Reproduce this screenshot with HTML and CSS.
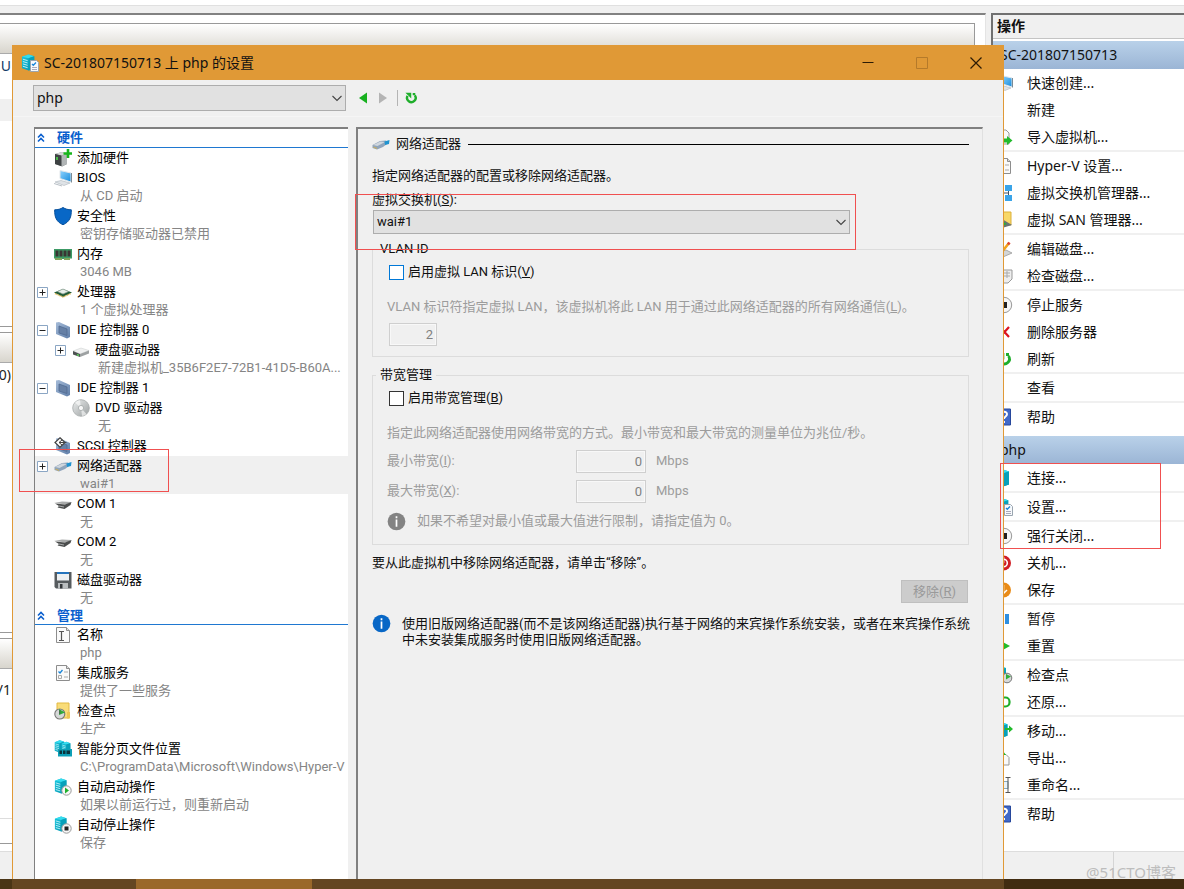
FILE: index.html
```html
<!DOCTYPE html>
<html lang="zh-CN">
<head>
<meta charset="utf-8">
<title>SC-201807150713 上 php 的设置</title>
<link rel="stylesheet" href="styles.css">
</head>
<body>
<svg class="defs" aria-hidden="true">
  <defs>
    <linearGradient id="g-cyan" x1="0" y1="0" x2="1" y2="1"><stop offset="0" stop-color="#16c6de"/><stop offset="1" stop-color="#0791ab"/></linearGradient>
    <linearGradient id="g-steel" x1="0" y1="0" x2="1" y2="1"><stop offset="0" stop-color="#a5bbd8"/><stop offset="1" stop-color="#5f7ea8"/></linearGradient>
    <linearGradient id="g-grey" x1="0" y1="0" x2="1" y2="1"><stop offset="0" stop-color="#eceeee"/><stop offset="1" stop-color="#9a9fa0"/></linearGradient>
    <linearGradient id="g-blue" x1="0" y1="0" x2="1" y2="1"><stop offset="0" stop-color="#8fd4ff"/><stop offset="1" stop-color="#168bdc"/></linearGradient>
  </defs>
  <symbol id="server" viewBox="0 0 18 18"><path d="M1 3l7-2.5 6 2v13L8 17.500 1 15z" fill="url(#g-cyan)"/><path d="M1 3l7-2.500 6 2-6 2z" fill="#35dcef"/><path d="M8 4.500l6-2v13l-6 2z" fill="#07a0ba"/><path d="M2 5.500l5 1.500M2 8l5 1.500M2 10.500L7 12M2 13l5 1.500" stroke="#d8fbff" stroke-width=".9"/></symbol>
  <symbol id="sheet" viewBox="0 0 18 18"><path d="M2.500 1.500h10l3 3v12h-13z" fill="#fafafa" stroke="#8d8d8d"/><path d="M12.500 1.500v3h3" fill="#ddd" stroke="#8d8d8d"/></symbol>
  <symbol id="settings" viewBox="0 0 18 18"><use href="#server" width="17" height="17"/><path d="M9.500 6.500h6l2 2v9h-8z" fill="#f8fafc" stroke="#9aa5b0"/><path d="M11 10l1.300 1.300L15 8.500" fill="none" stroke="#1784d8" stroke-width="1.300"/><path d="M11 13.500h5M11 15.500h5" stroke="#aab"/></symbol>
  <symbol id="addhw" viewBox="0 0 18 18"><path d="M1 5l7-2 5 2v10l-5 2.500L1 15z" fill="#777b7c"/><path d="M1 5l7-2 5 2-5 1.500z" fill="#d5d7d7"/><path d="M1 5l6 1.500V17l-6-2z" fill="#3e4243"/><path d="M8 6.500L13 5v10l-5 2.500z" fill="#b1b5b6"/><path d="M3 8v3" stroke="#4fe34c" stroke-width="1.500"/><path d="M14 0v9M9.500 4.500h8.500" stroke="#18b51c" stroke-width="2.600"/></symbol>
  <symbol id="bios" viewBox="0 0 18 18"><path d="M6 1.500L17 4v9L6 9.500z" fill="url(#g-blue)" stroke="#e1e6ea"/><path d="M17.500 4v9.500" stroke="#7c8a94"/><path d="M1 13l6-1.500 9 2.500-6 2.500z" fill="#dfe3e7" stroke="#adb5bc" stroke-width=".6"/><path d="M0 14.500l8 2.500" stroke="#b7bec5"/></symbol>
  <symbol id="shield" viewBox="0 0 18 18"><path d="M9 .5c2.500 1.600 5 2.300 8.300 2.300C17.600 10 15.500 15 9 17.700 2.500 15 .4 10 .7 2.800 4 2.800 6.500 2.100 9 .5z" fill="#0867c6" stroke="#064f9b"/></symbol>
  <symbol id="memory" viewBox="0 0 18 18"><path d="M0 4h18v9.500h-2V15h-6v-1H8v1H1v-1.500H0z" fill="#3c9a65"/><path d="M1.500 5.500h3v6h-3zM5.500 5.500h3v6h-3zM9.500 5.500h3v6h-3zM13.500 5.500h3v6h-3z" fill="#3a3433"/><path d="M1 14h7M10 14h6" stroke="#c6ac54"/></symbol>
  <symbol id="cpu" viewBox="0 0 18 18"><path d="M0 9.500L9 6l9 3.500L9 14z" fill="#1d5a38"/><path d="M1 10.500L9 14l8-3.500" fill="none" stroke="#d7b24c" stroke-width="1.400" stroke-dasharray="1 .6"/><path d="M3.500 8.500L9 6l5.500 2.500L9 11z" fill="#e7eee9" stroke="#93a59a" stroke-width=".7"/></symbol>
  <symbol id="ide" viewBox="0 0 18 18"><path d="M2 1.500l3-.5 11 5v10l-3 1.500L2 13z" fill="url(#g-steel)"/><path d="M5 5l8 3v6.500L5 12z" fill="#6680a5" stroke="#506b93" stroke-width=".8"/></symbol>
  <symbol id="disk" viewBox="0 0 18 18"><path d="M1 10l8-3 8 2.500-9 3.500z" fill="#f0f1f1" stroke="#c9cccc" stroke-width=".5"/><path d="M1 10l7 3v3l-7-2.500z" fill="#4d5152"/><path d="M8 13l9-3.500v3L8 16z" fill="#9da1a2"/><path d="M5 13.700l2 .7" stroke="#5be05b" stroke-width="1.300"/></symbol>
  <symbol id="dvd" viewBox="0 0 18 18"><circle cx="9" cy="9" r="8.300" fill="url(#g-grey)" stroke="#a4a9a9" stroke-width=".8"/><path d="M9 9L3 3.500A8 8 0 0 1 8 1zM9 9l5.500 6A8 8 0 0 1 10 17z" fill="#fff" opacity=".6"/><circle cx="9" cy="9" r="2.600" fill="#f8f8f8" stroke="#9a9f9f" stroke-width=".7"/></symbol>
  <symbol id="scsi" viewBox="0 0 18 18"><use href="#ide"/><path d="M6 .8L11 5.500 6 10.200 1 5.500z" fill="#fff" stroke="#444" stroke-width="1.200"/><path d="M12.500 5.500H5M8 3L5 5.500 8 8" fill="none" stroke="#444"/></symbol>
  <symbol id="net" viewBox="0 0 18 18"><path d="M.5 10L8 6l6-.5 1 3.500-4 3-6 2.500-4.500-1.500z" fill="#8fa4bb"/><path d="M1 10l7.500-3.500 4.500.5-7.500 4z" fill="#cfd6dd"/><path d="M12.500 6.500L17.500 5l-.5 4-4 1z" fill="#1f93d0"/><path d="M1.500 12l3.500 1.500" stroke="#c9ae62" stroke-width="1.200"/></symbol>
  <symbol id="com" viewBox="0 0 18 18"><path d="M0 8l8-1.500 9.500.5-5 2.500z" fill="#a9abab"/><path d="M1 8.500l10 1L17.500 7l-1 3-6 4-7-1.500L5 11z" fill="#4b4d4d"/><path d="M5 11l5 1" stroke="#a8aaaa"/></symbol>
  <symbol id="floppy" viewBox="0 0 18 18"><path d="M.5 1h17v16.500H2L.5 16z" fill="#565b5e"/><path d="M3 1h12v8.500H3z" fill="#edf0f2"/><path d="M3 1h12v2H3z" fill="#2474bd"/><path d="M4 12h10v5.500H4z" fill="#b9bdbf"/><path d="M6 13h2.500v4.500H6z" fill="#33373a"/></symbol>
  <symbol id="name" viewBox="0 0 18 18"><use href="#sheet"/><path d="M5 5.500h5M5 14.500h5M7.500 5.500v9" stroke="#555" stroke-width="1.200"/></symbol>
  <symbol id="check" viewBox="0 0 18 18"><use href="#sheet"/><path d="M4.500 7.500L6 9l2.500-3" fill="none" stroke="#1784d8" stroke-width="1.300"/><path d="M10 8h4M10 13h4M4.500 11.500h3v3h-3z" fill="none" stroke="#aaa"/></symbol>
  <symbol id="checkpoint" viewBox="0 0 18 18"><path d="M3 1h12v15H3z" fill="#f9dc78" stroke="#e2b942"/><path d="M13 10h3v6.500h-3z" fill="#efc653"/><circle cx="5.800" cy="12" r="5" fill="#d6d8d8" stroke="#777" stroke-width="1.100"/><path d="M5 7l6 3.500L5 13z" fill="#2fae39"/><path d="M5.800 12V8.500" stroke="#555"/></symbol>
  <symbol id="paging" viewBox="0 0 18 18"><use href="#server" width="13" height="13"/><use href="#server" x="7" y="1" width="12" height="13"/><path d="M4 9h14v7.500H4z" fill="#0c9fb6"/><path d="M5.500 10.500H8v3.500H5.500zM9 10.500h2.500v3.500H9zM12.500 10.500h3.500v3.500h-3.500z" fill="#08333c"/></symbol>
  <symbol id="autostart" viewBox="0 0 18 18"><use href="#server" width="16" height="16"/><circle cx="12.500" cy="12.500" r="4.700" fill="#f7f7f7" stroke="#999"/><path d="M11 9.500l4 3-4 3z" fill="#20b02a"/></symbol>
  <symbol id="autostop" viewBox="0 0 18 18"><use href="#server" width="16" height="16"/><circle cx="12.500" cy="12.500" r="4.700" fill="#f7f7f7" stroke="#999"/><path d="M10.500 10.500h4v4h-4z" fill="#222"/></symbol>
  <symbol id="import" viewBox="0 0 18 18"><path d="M4 2h7l3 3v11H4z" fill="#fafafa" stroke="#999"/><path d="M8 10.500h4V8l5.500 4.500L12 17v-2.500H8z" fill="#22bb2c"/></symbol>
  <symbol id="switch" viewBox="0 0 18 18"><path d="M1 6h6v6H1zM10 1h7v6h-7zM10 11h7v6h-7z" fill="#3aa4e8"/><path d="M7 9h6.500M13.500 7v4" stroke="#456"/></symbol>
  <symbol id="san" viewBox="0 0 18 18"><path d="M3 1h13v13H3z" fill="#f8d868" stroke="#dcb13d"/><path d="M7 8l10 6-10 3z" fill="#697274"/><path d="M7 10l5 3-5 2z" fill="#2fae39"/></symbol>
  <symbol id="edit" viewBox="0 0 18 18"><path d="M3 12l8-2 6 3-8 3.500z" fill="#d3d5d6" stroke="#aaa"/><path d="M6 13L14 3" stroke="#f3a31c" stroke-width="2.600"/><path d="M13 4.500L14.500 2.500" stroke="#dc4433" stroke-width="2.600"/></symbol>
  <symbol id="inspect" viewBox="0 0 18 18"><path d="M3 3h14v9l-4 4H3z" fill="#eee" stroke="#999"/><path d="M5 6h10M5 9h10M8 4v7M12 4v7" stroke="#aaa"/></symbol>
  <symbol id="stop" viewBox="0 0 18 18"><circle cx="9" cy="9" r="7.700" fill="#f6f6f6" stroke="#999"/><path d="M6 6h6v6H6z" fill="#222"/></symbol>
  <symbol id="delete" viewBox="0 0 18 18"><path d="M5 4l9 10M14 4L5 14" stroke="#dc1420" stroke-width="2.200"/></symbol>
  <symbol id="refresh" viewBox="0 0 18 18"><path d="M5 6.500A5 5 0 1 0 13.500 6M11 4.500h3" fill="none" stroke="#1fae2b" stroke-width="2.800"/><path d="M2.500 3h6.800v6.500z" fill="#1fae2b"/></symbol>
  <symbol id="restore" viewBox="0 0 18 18"><path d="M6 4.500h4.500a4 4 0 0 1 4 4v1a4 4 0 0 1-4 4H5" fill="none" stroke="#1fae2b" stroke-width="2.200"/></symbol>
  <symbol id="help" viewBox="0 0 18 18"><path d="M2 1h13.500v16H2z" fill="#4068c8" stroke="#27489c"/><path d="M6 6.500c0-4 6.500-3.500 6 0-.3 2-3 2-3 4.500M9 13v2" fill="none" stroke="#fff" stroke-width="1.900"/></symbol>
  <symbol id="off" viewBox="0 0 18 18"><circle cx="8.500" cy="9" r="7.500" fill="#d01e24"/><circle cx="8.500" cy="9" r="3.800" fill="none" stroke="#fff" stroke-width="1.600"/><path d="M8.500 3v6" stroke="#fff" stroke-width="1.600"/></symbol>
  <symbol id="save" viewBox="0 0 18 18"><circle cx="8.500" cy="9" r="7.500" fill="#e98b17"/><path d="M8.500 4v8M5 9l3.500 3.500L12 9" fill="none" stroke="#fff" stroke-width="1.500"/></symbol>
  <symbol id="pause" viewBox="0 0 18 18"><path d="M4 4h4v10H4zM10 4h4v10h-4z" fill="#2f8fe0"/></symbol>
  <symbol id="play" viewBox="0 0 18 18"><path d="M5 3.500L15 9 5 14.500z" fill="#22bb2c"/></symbol>
  <symbol id="snap" viewBox="0 0 18 18"><use href="#server" width="14" height="14"/><circle cx="12" cy="12" r="4.800" fill="#d6d8d8" stroke="#777"/><path d="M11 8l5 2.500-5 3z" fill="#2fae39"/></symbol>
  <symbol id="move" viewBox="0 0 18 18"><use href="#server" width="16" height="16"/><path d="M10 6h4V3.500L18 7l-4 3.500V8h-4z" fill="#22bb2c"/></symbol>
  <symbol id="export" viewBox="0 0 18 18"><path d="M4.500 16V5.500H11l3 3V16z" fill="#fafafa" stroke="#999"/><path d="M7 13V6H5l3-4 3 4H9v7z" fill="#22bb2c"/></symbol>
  <symbol id="rename" viewBox="0 0 18 18"><path d="M1 5.500h12v7H1z" fill="#e8f3fb" stroke="#8ab"/><path d="M3 7.500h6v3H3z" fill="#1784d8"/><path d="M10.500 1.500h5M10.500 16.500h5M13 1.500v15" stroke="#555"/></symbol>
  <symbol id="chev" viewBox="0 0 10 10"><path d="M.5 3L5 7.500 9.500 3" fill="none" stroke="#444" stroke-width="1.100"/></symbol>
  <symbol id="collapse" viewBox="0 0 8 10"><path d="M1 4.500l3-3 3 3M1 8.500l3-3 3 3" fill="none" stroke="#0a5fce" stroke-width="1.600"/></symbol>
  <symbol id="info" viewBox="0 0 20 20"><circle cx="10" cy="10" r="9.300" fill="currentColor"/><path d="M10 4.500v2M10 8v7.500" stroke="#fff" stroke-width="1.800"/></symbol>
  <symbol id="plus" viewBox="0 0 11 11"><path d="M.5.5h10v10H.5z" fill="#fff" stroke="#8ba6c4"/><path d="M2.500 5.500h6M5.500 2.500v6" stroke="#222"/></symbol>
  <symbol id="minus" viewBox="0 0 11 11"><path d="M.5.5h10v10H.5z" fill="#fff" stroke="#8ba6c4"/><path d="M2.500 5.500h6" stroke="#222"/></symbol>
</svg>

<div class="console">
  <main class="lists">
    <section class="list list-machines">
      <div class="list-head"></div>
      <p class="clip">U</p>
      <div class="clip-row"></div>
    </section>
    <section class="list list-checkpoints">
      <div class="list-head"></div>
      <p class="clip">0)</p>
    </section>
    <section class="list list-details">
      <div class="list-head"></div>
      <p class="clip">/1</p>
      <div class="tab-strip"></div>
    </section>
  </main>
  <aside class="actions">
    <h2 class="actions-title">操作</h2>
    <h3 class="section">SC-201807150713</h3>
    <ul class="group"><li><button><svg><use href="#bios"/></svg>快速创建...</button></li><li><button><svg></svg>新建</button></li><li><button><svg><use href="#import"/></svg>导入虚拟机...</button></li></ul>
    <ul class="group"><li><button><svg><use href="#check"/></svg>Hyper-V 设置...</button></li><li><button><svg><use href="#switch"/></svg>虚拟交换机管理器...</button></li><li><button><svg><use href="#san"/></svg>虚拟 SAN 管理器...</button></li></ul>
    <ul class="group"><li><button><svg><use href="#edit"/></svg>编辑磁盘...</button></li><li><button><svg><use href="#inspect"/></svg>检查磁盘...</button></li></ul>
    <ul class="group"><li><button><svg><use href="#stop"/></svg>停止服务</button></li><li><button><svg><use href="#delete"/></svg>删除服务器</button></li><li><button><svg><use href="#refresh"/></svg>刷新</button></li></ul>
    <ul class="group"><li><button><svg></svg>查看</button></li></ul>
    <ul class="group"><li><button><svg><use href="#help"/></svg>帮助</button></li></ul>
    <h3 class="section section-vm">php</h3>
    <ul class="group"><li><button><svg><use href="#server"/></svg>连接...</button></li></ul>
    <ul class="group"><li><button><svg><use href="#settings"/></svg>设置...</button></li></ul>
    <ul class="group"><li><button><svg><use href="#stop"/></svg>强行关闭...</button></li><li><button><svg><use href="#off"/></svg>关机...</button></li><li><button><svg><use href="#save"/></svg>保存</button></li></ul>
    <ul class="group"><li><button><svg><use href="#pause"/></svg>暂停</button></li><li><button><svg><use href="#play"/></svg>重置</button></li></ul>
    <ul class="group"><li><button><svg><use href="#snap"/></svg>检查点</button></li><li><button><svg><use href="#restore"/></svg>还原...</button></li></ul>
    <ul class="group"><li><button><svg><use href="#move"/></svg>移动...</button></li><li><button><svg><use href="#export"/></svg>导出...</button></li><li><button><svg><use href="#rename"/></svg>重命名...</button></li></ul>
    <ul class="group"><li><button><svg><use href="#help"/></svg>帮助</button></li></ul>
  </aside>
</div>
<footer class="status"><span class="status-cell"></span></footer>

<div class="dialog" role="dialog" aria-labelledby="dlg-title">
  <header class="titlebar">
    <svg class="app-icon"><use href="#settings"/></svg>
    <h1 id="dlg-title">SC-201807150713 上 php 的设置</h1>
    <button aria-label="最小化"><svg viewBox="0 0 12 12"><path d="M.5 5.500h11" stroke="#2b1b05"/></svg></button>
    <button aria-label="最大化" disabled><svg viewBox="0 0 12 12"><path d="M.5.5h11v11H.5z" fill="none" stroke="#b57a2a"/></svg></button>
    <button aria-label="关闭"><svg viewBox="0 0 12 12"><path d="M.5.5l11 11M11.500.5l-11 11" stroke="#2b1b05" stroke-width="1.200"/></svg></button>
  </header>
  <div class="toolbar">
    <div class="combo combo-vm"><select aria-label="虚拟机"><option>php</option></select><svg><use href="#chev"/></svg></div>
    <button aria-label="后退"><svg viewBox="0 0 12 12"><path d="M10 .5v11L2 6z" fill="#17b01f"/></svg></button>
    <button aria-label="前进"><svg viewBox="0 0 12 12"><path d="M2 .5v11L10 6z" fill="#b4b4b4"/></svg></button>
    <span class="divider"></span>
    <button aria-label="刷新"><svg viewBox="2 2 14 14"><use href="#refresh" width="18" height="18"/></svg></button>
  </div>
  <div class="panes">
    <nav class="tree">
      <h2><svg><use href="#collapse"/></svg>硬件</h2>
      <ul>
        <li><i></i><svg class="ico"><use href="#addhw"/></svg><b>添加硬件</b></li>
        <li><i></i><svg class="ico"><use href="#bios"/></svg><b>BIOS</b><small>从 CD 启动</small></li>
        <li><i></i><svg class="ico"><use href="#shield"/></svg><b>安全性</b><small>密钥存储驱动器已禁用</small></li>
        <li><i></i><svg class="ico"><use href="#memory"/></svg><b>内存</b><small>3046 MB</small></li>
        <li><svg class="box"><use href="#plus"/></svg><svg class="ico"><use href="#cpu"/></svg><b>处理器</b><small>1 个虚拟处理器</small></li>
        <li><svg class="box"><use href="#minus"/></svg><svg class="ico"><use href="#ide"/></svg><b>IDE 控制器 0</b></li>
        <li class="child"><svg class="box"><use href="#plus"/></svg><svg class="ico"><use href="#disk"/></svg><b>硬盘驱动器</b><small>新建虚拟机_35B6F2E7-72B1-41D5-B60A...</small></li>
        <li><svg class="box"><use href="#minus"/></svg><svg class="ico"><use href="#ide"/></svg><b>IDE 控制器 1</b></li>
        <li class="child"><i></i><svg class="ico"><use href="#dvd"/></svg><b>DVD 驱动器</b><small>无</small></li>
        <li><i></i><svg class="ico"><use href="#scsi"/></svg><b>SCSI 控制器</b></li>
        <li class="selected"><svg class="box"><use href="#plus"/></svg><svg class="ico"><use href="#net"/></svg><b>网络适配器</b><small>wai#1</small></li>
        <li><i></i><svg class="ico"><use href="#com"/></svg><b>COM 1</b><small>无</small></li>
        <li><i></i><svg class="ico"><use href="#com"/></svg><b>COM 2</b><small>无</small></li>
        <li><i></i><svg class="ico"><use href="#floppy"/></svg><b>磁盘驱动器</b><small>无</small></li>
      </ul>
      <h2><svg><use href="#collapse"/></svg>管理</h2>
      <ul>
        <li><i></i><svg class="ico"><use href="#name"/></svg><b>名称</b><small>php</small></li>
        <li><i></i><svg class="ico"><use href="#check"/></svg><b>集成服务</b><small>提供了一些服务</small></li>
        <li><i></i><svg class="ico"><use href="#checkpoint"/></svg><b>检查点</b><small>生产</small></li>
        <li><i></i><svg class="ico"><use href="#paging"/></svg><b>智能分页文件位置</b><small>C:\ProgramData\Microsoft\Windows\Hyper-V</small></li>
        <li><i></i><svg class="ico"><use href="#autostart"/></svg><b>自动启动操作</b><small>如果以前运行过，则重新启动</small></li>
        <li><i></i><svg class="ico"><use href="#autostop"/></svg><b>自动停止操作</b><small>保存</small></li>
      </ul>
    </nav>
    <section class="page">
      <h2 class="page-title"><svg><use href="#net"/></svg>网络适配器</h2>
      <p class="lead">指定网络适配器的配置或移除网络适配器。</p>
      <label class="switch-label" for="vswitch">虚拟交换机(<u>S</u>):</label>
      <div class="combo combo-switch"><select id="vswitch"><option>wai#1</option></select><svg><use href="#chev"/></svg></div>
      <fieldset class="vlan">
        <legend>VLAN ID</legend>
        <label class="tick tick-focus"><input type="checkbox"><span>启用虚拟 LAN 标识(<u>V</u>)</span></label>
        <label class="note" for="vlan-id">VLAN 标识符指定虚拟 LAN，该虚拟机将此 LAN 用于通过此网络适配器的所有网络通信(<u>L</u>)。</label>
        <input class="num num-small" id="vlan-id" type="text" value="2" disabled>
      </fieldset>
      <fieldset class="bandwidth">
        <legend>带宽管理</legend>
        <label class="tick"><input type="checkbox"><span>启用带宽管理(<u>B</u>)</span></label>
        <p class="note">指定此网络适配器使用网络带宽的方式。最小带宽和最大带宽的测量单位为兆位/秒。</p>
        <div class="limit"><label for="bw-min">最小带宽(<u>I</u>):</label><input class="num" id="bw-min" type="text" value="0" disabled><span>Mbps</span></div>
        <div class="limit"><label for="bw-max">最大带宽(<u>X</u>):</label><input class="num" id="bw-max" type="text" value="0" disabled><span>Mbps</span></div>
        <p class="hint"><svg><use href="#info"/></svg>如果不希望对最小值或最大值进行限制，请指定值为 0。</p>
      </fieldset>
      <p class="remove-text">要从此虚拟机中移除网络适配器，请单击“移除”。</p>
      <button class="remove" disabled>移除(<u>R</u>)</button>
      <div class="legacy"><svg><use href="#info"/></svg><p>使用旧版网络适配器(而不是该网络适配器)执行基于网络的来宾操作系统安装，或者在来宾操作系统中未安装集成服务时使用旧版网络适配器。</p></div>
    </section>
  </div>
</div>

<div class="mark mark-switch"></div>
<div class="mark mark-adapter"></div>
<div class="mark mark-actions"></div>
<div class="watermark">@51CTO博客</div>
<div class="taskbar"><span class="task"></span></div>
</body>
</html>
```
FILE: styles.css
```css
* { box-sizing: border-box; }
body {
  margin: 0;
  height: 100vh;
  position: relative;
  display: flex;
  flex-direction: column;
  overflow: hidden;
  background: #f0f0f0;
  border-top: 5px solid #fff;
  color: #111;
  font: 14px/20px "Noto Sans", "Noto Sans CJK SC", sans-serif;
}
h1, h2, h3, p, ul { margin: 0; padding: 0; font-weight: normal; }
ul { list-style: none; }
button, select, input { font: inherit; color: inherit; margin: 0; }
button { border: 0; background: none; padding: 0; }
svg { display: block; flex: none; width: 18px; height: 18px; }
.defs { position: absolute; width: 0; height: 0; }

/* Hyper-V manager console behind the dialog */
.console {
  flex: 1;
  display: flex;
  gap: 5px;
  min-height: 0;
  padding-top: 7px;
  border-top: 1px solid #e0e0e0;
}
.lists {
  flex: 1;
  display: flex;
  flex-direction: column;
  background: #fff;
  border-top: 2px solid #828282;
  border-right: 1px solid #e4e4e4;
  padding: 8px 10px 0 0;
}
.list { border-top: 1px solid #999; border-right: 1px solid #999; border-bottom: 1px solid #999; }
.list + .list { margin-top: 5px; }
.list-head { height: 30px; background: linear-gradient(#fff, #d8d5cd); border-bottom: 1px solid #aaa; }
.list-machines { height: 304px; }
.list-checkpoints { height: 301px; }
.list-details { height: 206px; }
.clip { display: flex; justify-content: flex-end; width: 11px; white-space: nowrap; line-height: 24px; color: #222; }
.list-machines .clip { color: #123a66; }
.clip-row { width: 12px; height: 22px; margin-top: 21px; background: #f0f0f0; }
.list-details .clip { margin-top: 9px; }
.tab-strip { margin-top: 116px; border-top: 1px solid #ddd; }

.actions {
  width: 193px;
  display: flex;
  flex-direction: column;
  background: #fff;
  border-top: 2px solid #707070;
  border-left: 2px solid #707070;
}
.actions-title { height: 24px; padding-left: 4px; line-height: 22px; font-weight: bold; font-size: 14px; background: #f0f0f0; border-bottom: 1px solid #c4c4c4; }
.section {
  height: 28px;
  margin-top: 2px;
  padding-left: 7px;
  font-size: 14px;
  line-height: 28px;
  background: linear-gradient(#b9d1e9, #9bb5d5);
}
.section-vm { margin-top: 6px; }
.group + .group { border-top: 2px solid #f0f0f0; }
.group button {
  display: flex;
  align-items: center;
  width: 100%;
  height: 27px;
  gap: 14px;
  padding-left: 2px;
  white-space: nowrap;
}
.status { height: 38px; padding-left: 1113px; border-top: 1px solid #ddd; }
.status-cell { display: block; width: 1px; height: 28px; background: #d5d5d5; }

/* Settings dialog */
.dialog {
  position: absolute;
  top: 40px;
  right: 180px;
  bottom: 0;
  left: 12px;
  display: flex;
  flex-direction: column;
  overflow: hidden;
  background: #f0f0f0;
  border: 1px solid #e09936;
  border-bottom: 0;
  font-size: 13px;
}
.titlebar { display: flex; align-items: center; height: 34px; flex: none; padding-left: 8px; background: #e09936; }
.titlebar h1 { flex: 1; padding-left: 5px; font-size: 14px; }
.titlebar button { display: flex; justify-content: center; width: 54px; }
.titlebar button svg { width: 12px; height: 12px; }
.toolbar { display: flex; align-items: center; height: 37px; flex: none; padding: 0 20px; border-bottom: 1px solid #f5f5f5; }
.toolbar button { width: 20px; display: flex; justify-content: center; }
.toolbar button svg { width: 12px; height: 12px; }
.divider { width: 1px; height: 16px; margin: 0 3px 0 4px; background: #b4b4b4; }

.combo { display: grid; align-items: center; }
.combo select, .combo svg { grid-area: 1 / 1; }
.combo select { appearance: none; width: 100%; height: 100%; padding: 0 3px; background: #e1e1e1; border: 1px solid #adadad; border-radius: 0; }
.combo svg { width: 10px; height: 10px; margin-right: 4px; justify-self: end; pointer-events: none; }
.combo-vm { width: 313px; height: 26px; margin-right: 7px; font-size: 14px; }
.combo-switch { width: 477px; height: 24px; margin: 1px 0 0 1px; }

.panes { flex: 1; display: flex; gap: 8px; min-height: 0; padding: 10px 20px 0 21px; font-family: Roboto, "Noto Sans CJK SC", sans-serif; }
.tree { width: 314px; flex: none; background: #fff; border: solid #808080; border-width: 2px 0 0 1px; }
.tree h2 { display: flex; align-items: center; gap: 12px; height: 19px; padding-left: 2px; border-bottom: 1px solid #1f78d1; color: #0a5fce; font-size: 13px; font-weight: bold; line-height: 18px; }
.tree ul + h2 { height: 17px; line-height: 16px; }
.tree h2 svg { width: 8px; height: 10px; }
.tree li {
  display: grid;
  grid-template-columns: 12px 18px 1fr;
  column-gap: 5px;
  align-items: center;
  padding-left: 2px;
  line-height: 20px;
  white-space: nowrap;
}
.tree .box { width: 11px; height: 11px; }
.tree b { font-weight: normal; color: #000; }
.tree small { grid-column: 3; padding: 0 0 3px 3px; font-size: 13px; line-height: 15px; color: #858585; }
.tree .child { padding-left: 20px; }
.tree .selected { background: #f0f0f0; }

.page { flex: 1; min-width: 0; padding: 5px 13px 0 14px; border: solid #808080; border-width: 2px 1px 0 2px; border-right-color: #e0e0e0; }
.page-title { display: flex; align-items: center; gap: 6px; font-size: 13px; line-height: 20px; }
.page-title::after { content: ""; flex: 1; height: 1px; margin-left: 1px; background: #000; }
.lead { margin-top: 12px; }
.switch-label { display: block; margin-top: 5px; line-height: 18px; }
.vlan, .bandwidth { margin: 5px 0 0; padding: 0 14px; min-width: 0; border: 1px solid #dcdcdc; }
.vlan { height: 118px; }
.bandwidth { height: 180px; margin-top: 8px; }
legend { padding: 0 4px; margin-left: -11px; line-height: 20px; }
.tick { display: flex; align-items: center; gap: 4px; height: 22px; margin: 2px 0 0 2px; }
.tick input { appearance: none; width: 15px; height: 15px; background: #fff; border: 1px solid #333; }
.tick-focus input { border-color: #0078d7; }
.note { display: block; margin-top: 14px; color: #9c9c9c; white-space: nowrap; }
.num { width: 70px; height: 23px; padding: 0 3px; text-align: right; color: #808080; background: #f0f0f0; border: 1px solid #cfcfcf; box-shadow: inset 0 0 0 1px #f8f8f8; }
.num-small { display: block; width: 48px; margin: 6px 0 0 2px; }
.limit { display: grid; grid-template-columns: 189px 70px 1fr; align-items: center; height: 30px; color: #9c9c9c; }
.limit span { padding-left: 10px; }
.note + .limit { margin-top: 3px; }
.hint { display: flex; align-items: center; gap: 11px; height: 30px; color: #9c9c9c; }
.hint svg { width: 19px; height: 19px; color: #838383; }
.remove-text { margin-top: 8px; }
.remove { display: block; width: 67px; height: 23px; margin: 7px 1px 0 auto; background: #cccccc; border: 1px solid #bfbfbf; color: #9a9a9a; }
.legacy { display: flex; gap: 11px; margin: 11px -4px 0 0; line-height: 16px; }
.legacy svg { width: 19px; height: 19px; color: #0867c6; }
.legacy p { padding-top: 2px; }

/* Highlight frames drawn over the windows */
.mark { position: absolute; border: 1px solid #f05050; pointer-events: none; }
.mark-switch { left: 355px; top: 189px; width: 501px; height: 56px; }
.mark-adapter { left: 19px; top: 444px; width: 150px; height: 43px; }
.mark-actions { left: 1000px; top: 458px; width: 161px; height: 86px; }
.watermark { position: absolute; right: 8px; bottom: 6px; color: #bdbdbd; font-size: 15px; line-height: 22px; }
.taskbar { position: absolute; left: 0; right: 0; bottom: 0; height: 10px; background: linear-gradient(90deg, #4a3516 12px, #644622 12px, #644622 1004px, #412c11 1004px); }
.task { display: block; width: 176px; height: 10px; margin-left: 136px; background: #9a682a; }
```
